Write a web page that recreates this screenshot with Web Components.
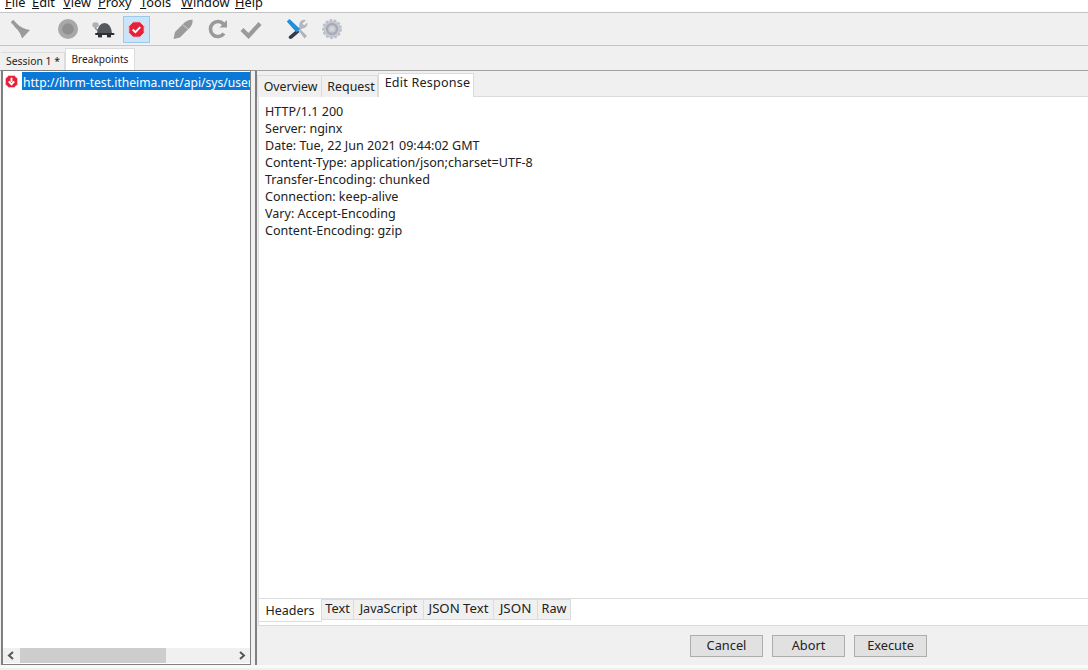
<!DOCTYPE html>
<html><head><meta charset="utf-8">
<style>
html,body{margin:0;padding:0;height:100%;overflow:hidden;background:#f0f0f0}
body{font:13px "Noto Sans","Open Sans",sans-serif;color:#111}
</style></head><body>
<app-shell></app-shell>
<script>
function def(name,css,html){
  customElements.define(name,class extends HTMLElement{
    constructor(){super();const s=this.attachShadow({mode:'open'});s.innerHTML='<style>'+css+'</style>'+(typeof html==='function'?html(this):html);}
  });
}
const icons={
 broom:'<path d="M2 2l6 6.500" stroke="#9a9a9a" stroke-width="3.400"/><path d="M6 4.500 Q13 10 20 11 L12 19.500 Q10.500 13 4.500 7.500 Z" fill="#9a9a9a"/>',
 rec:'<circle cx="10" cy="10" r="10" fill="#a8a8a8"/><circle cx="10" cy="10" r="5.800" fill="#909090"/>',
 turtle:'<ellipse cx="3.500" cy="4" rx="3.200" ry="2.800" fill="#a9b2b8"/><path d="M3 6.500 Q4 9 7 10" stroke="#8a9298" stroke-width="1.500" fill="none"/><path d="M5 12.500 Q6 2 12.500 2 Q19 2 20 12.500 Z" fill="#55585c"/><rect x="3" y="12" width="19.500" height="2" rx="1" fill="#2c2e32"/><rect x="6" y="14" width="4" height="2.400" fill="#2c2e32"/><rect x="15" y="14" width="4" height="2.400" fill="#2c2e32"/>',
 stop:'<path d="M6.100 1h7.800L19 6.100v7.800L13.900 19H6.100L1 13.900V6.100Z" fill="#e5203a" stroke="#f6d3da"/><path d="M5.500 10l3.200 3.200 5.800-6" fill="none" stroke="#fff" stroke-width="2.200"/>',
 pen:'<path d="M.5 20 L2 13 L12 3 Q15 .5 19.500 .5 Q20 5 17 8.500 L7 18.500 Z" fill="#9b9b9b"/><path d="M10 6l5 4" stroke="#d6d6d6" stroke-width="1"/>',
 redo:'<path d="M15.500 5A7.500 7.500 0 1 0 16 14.500" fill="none" stroke="#9a9a9a" stroke-width="3.600"/><path d="M11.500 8.500h7.500V1z" fill="#9a9a9a"/>',
 check:'<path d="M2 9.500l6.500 6.500L20 3.500" fill="none" stroke="#9a9a9a" stroke-width="4.200"/>',
 tools:'<path d="M13 13 L18.500 20.500 L21 18 L14.500 11.500 Z" fill="#aab4bc"/><path d="M11 11.500 L13.500 14 L6 20.500 Q4 21.500 3 20.300 Q2 19 3.300 18 Z" fill="#333c46"/><path d="M20 2.200 A5 5 0 0 0 13.500 8.500 L11 11 L13 13 L16 10.500 A5 5 0 0 0 21.300 4.500 L18.300 7.300 L16.300 5.800 Z" fill="#aeb8c0"/><path d="M.8 3.500 L3.500 1 L14 11 L10.500 14.500 Z" fill="#1e8fd8"/>',
 gear:'<circle cx="10" cy="10" r="8.600" fill="#c3c6ce" stroke="#bcc0c8" stroke-width="2.600" stroke-dasharray="2.700 1.500"/><circle cx="10" cy="10" r="7.600" fill="#c7cad1"/><circle cx="10" cy="10" r="5" fill="none" stroke="#a6abb5" stroke-width="2.400"/><circle cx="10" cy="10" r="2" fill="#d4d6dc"/>'
};
def('tool-icon',`:host{display:flex;align-items:center;justify-content:center;width:var(--w,22px);height:27px;box-sizing:border-box}
:host([active]){background:#cce4f7;border:1px solid #99c9ef}svg{display:block}`,
 h=>{const w=h.getAttribute('w')||22,t=h.getAttribute('h')||22;return `<svg width="${w}" height="${t}" viewBox="${h.getAttribute('vb')||`0 0 ${w} ${t}`}">${icons[h.getAttribute('name')]}</svg>`});

def('menu-bar',`:host{display:flex;height:12px;background:#fff;overflow:hidden;font-size:12.800px;color:#111;padding-left:5px}
span{display:block;line-height:18px;margin-top:-7px;white-space:nowrap}u{text-decoration-thickness:1px}`,
 `<span style="width:27px"><u>F</u>ile</span><span style="width:31px"><u>E</u>dit</span><span style="width:35px"><u>V</u>iew</span><span style="width:42px"><u>P</u>roxy</span><span style="width:41px"><u>T</u>ools</span><span style="width:54px"><u>W</u>indow</span><span><u>H</u>elp</span>`);

def('tool-bar',`:host{display:flex;align-items:center;height:34px;box-sizing:border-box;background:#f0f0f0;border-top:1px solid #c4c4c4;border-bottom:1px solid #c4c4c4;padding-left:10px}`,
 `<tool-icon name="broom" w="20" h="20" style="--w:20px"></tool-icon>
  <tool-icon name="rec" style="margin-left:27px;--w:21px" w="20" h="20"></tool-icon>
  <tool-icon name="turtle" style="margin-left:13px;--w:24px" w="23" h="17"></tool-icon>
  <tool-icon name="stop" active style="margin-left:8px;--w:27px" w="17" h="17" vb="0 0 20 20"></tool-icon>
  <tool-icon name="pen" style="margin-left:23px;--w:20px" w="20" h="21"></tool-icon>
  <tool-icon name="redo" style="margin-left:14px;--w:20px" w="19" h="20"></tool-icon>
  <tool-icon name="check" style="margin-left:13px;--w:22px" w="22" h="19"></tool-icon>
  <tool-icon name="tools" style="margin-left:24px;--w:22px" w="22" h="22"></tool-icon>
  <tool-icon name="gear" style="margin-left:13px;--w:22px" w="20" h="20"></tool-icon>`);

def('x-tab',`:host{display:block;box-sizing:border-box;background:#f0f0f0;border:1px solid #dcdcdc;border-bottom:0;border-left:0;white-space:nowrap;line-height:var(--lh,18px);font-size:var(--fs,13px);padding:var(--pad,4px 4px 0);height:var(--h,24px);width:var(--tw,auto);color:#222;text-align:center}
:host([sel]){background:#fff;border:1px solid #dcdcdc;border-bottom:0;height:var(--sh,26px);margin-top:var(--smt,-2px);padding:var(--spad,3px 7px 0);position:relative;z-index:1}`,`<slot></slot>`);

def('session-tabs',`:host{display:flex;align-items:flex-end;height:25px;box-sizing:border-box;padding-left:1px;border-bottom:1px solid #9a9a9a}
x-tab{--h:18px;--pad:0 0 0 1px;--lh:16px;--fs:10.400px;--tw:64px}x-tab[sel]{--lh:18px;--sh:22px;--smt:0;--spad:1px 0 0;--fs:10.100px;--tw:70px}`,
 `<x-tab>Session 1 *</x-tab><x-tab sel>Breakpoints</x-tab>`);

def('left-panel',`:host{display:flex;flex-direction:column;width:250px;box-sizing:border-box;border:1px solid #808080;border-left-width:2px;background:#fff;min-height:0}
.row{display:flex;height:18px;align-items:center;flex:none;overflow:hidden;padding-left:2px;margin-top:1px}
.sel{background:#0a78d7;color:#fff;line-height:18px;font-size:12.100px;margin-left:4px;padding:2px 0 0 1px;box-sizing:border-box;height:18px;flex:1;white-space:nowrap;overflow:hidden;min-width:0}
.row svg{flex:none}
.sp{flex:1}
.sb{height:15px;background:#f0f0f0;display:flex;align-items:center;flex:none;margin-bottom:1px}
.thumb{width:146px;height:15px;background:#cdcdcd;margin-left:1px}
.t{flex:1}`,
 `<div class="row"><svg width="13" height="13" viewBox="0 0 14 14"><path d="M4 .5h6L13.500 4v6L10 13.500H4L.5 10V4Z" fill="#e5203a" stroke="#f2c4cc"/><path d="M7 3v4.500M4 6.800l3 3.200 3-3.200" fill="none" stroke="#fff" stroke-width="2"/></svg><div class="sel">http://ihrm-test.itheima.net/api/sys/user/profile</div></div>
 <div class="sp"></div>
 <div class="sb"><svg width="16" height="15" viewBox="0 0 16 15"><path d="M10 4L6 7.500 10 11" fill="none" stroke="#555" stroke-width="2"/></svg><div class="thumb"></div><div class="t"></div><svg width="16" height="15" viewBox="0 0 16 15"><path d="M6 4l4 3.500L6 11" fill="none" stroke="#555" stroke-width="2"/></svg></div>`);

def('top-tabs',`:host{display:flex;align-items:flex-end;height:26px;padding-left:0;flex:none;border-bottom:1px solid #dcdcdc;box-sizing:border-box}
x-tab{margin-bottom:-1px}`,
 `<x-tab style="--h:22px;--pad:2px 0 0 2px;--tw:65px;--fs:12.300px;border-left:1px solid #dcdcdc">Overview</x-tab><x-tab style="--h:22px;--pad:2px 0 0 3px;--tw:56px;--fs:12.400px">Request</x-tab><x-tab sel style="--sh:24px;--spad:0 0 0 3px;--tw:96px;--fs:12.600px;letter-spacing:.2px">Edit Response</x-tab>`);

def('header-text',`:host{display:block;flex:1;background:#fff;padding:6px 6px;min-height:0;line-height:17px;font-size:12.550px;color:#222;white-space:pre;border-left:1px solid #dcdcdc;margin-left:1px}`,`<slot></slot>`);

def('bottom-tabs',`:host{display:flex;align-items:flex-start;flex:none;background:#fff;height:28px;box-sizing:border-box;border-top:1px solid #dcdcdc;border-bottom:1px solid #dcdcdc;margin-left:1px;border-left:1px solid #dcdcdc}
x-tab{--h:21px;--pad:0;--lh:17px;border-bottom:1px solid #dcdcdc}x-tab[sel]{--lh:18px;--sh:23px;--smt:0;--spad:3px 0 0;border-top:0;border-left:0;border-bottom:1px solid #dcdcdc}`,
 `<x-tab sel style="--tw:63px;--fs:12.500px">Headers</x-tab><x-tab style="--tw:32px;--fs:12.800px">Text</x-tab><x-tab style="--tw:70px;--fs:12.600px">JavaScript</x-tab><x-tab style="--tw:70px;--fs:13.200px">JSON Text</x-tab><x-tab style="--tw:44px;--fs:13.400px">JSON</x-tab><x-tab style="--tw:33px;--fs:12.700px">Raw</x-tab>`);

def('x-button',`:host{display:flex;align-items:center;justify-content:center;box-sizing:border-box;width:73px;height:22px;padding-bottom:2px;background:#e1e1e1;border:1px solid #adadad;font-size:12.800px;color:#222}`,`<slot></slot>`);

def('action-bar',`:host{display:flex;justify-content:flex-end;align-items:center;height:39px;flex:none;gap:9px;padding-right:161px;background:#f0f0f0}`,
 `<x-button>Cancel</x-button><x-button>Abort</x-button><x-button>Execute</x-button>`);

def('right-panel',`:host{display:flex;flex-direction:column;flex:1;min-width:0;border-left:2px solid #808080;border-top:1px solid #a0a0a0;background:#f0f0f0}`,
 `<top-tabs></top-tabs><header-text>HTTP/1.1 200
Server: nginx
Date: Tue, 22 Jun 2021 09:44:02 GMT
Content-Type: application/json;charset=UTF-8
Transfer-Encoding: chunked
Connection: keep-alive
Vary: Accept-Encoding
Content-Encoding: gzip</header-text><bottom-tabs></bottom-tabs><action-bar></action-bar>`);

def('app-shell',`:host{display:flex;flex-direction:column;width:1088px;height:670px;overflow:hidden;background:#f0f0f0}
.main{display:flex;height:595px;padding-left:1px;gap:4px;flex:none;margin-top:-1px}
.foot{height:3px;background:#fafafa;flex:none}`,
 `<menu-bar></menu-bar><tool-bar></tool-bar><session-tabs></session-tabs><div class="main"><left-panel></left-panel><right-panel></right-panel></div><div class="foot"></div>`);
</script>
</body></html>
